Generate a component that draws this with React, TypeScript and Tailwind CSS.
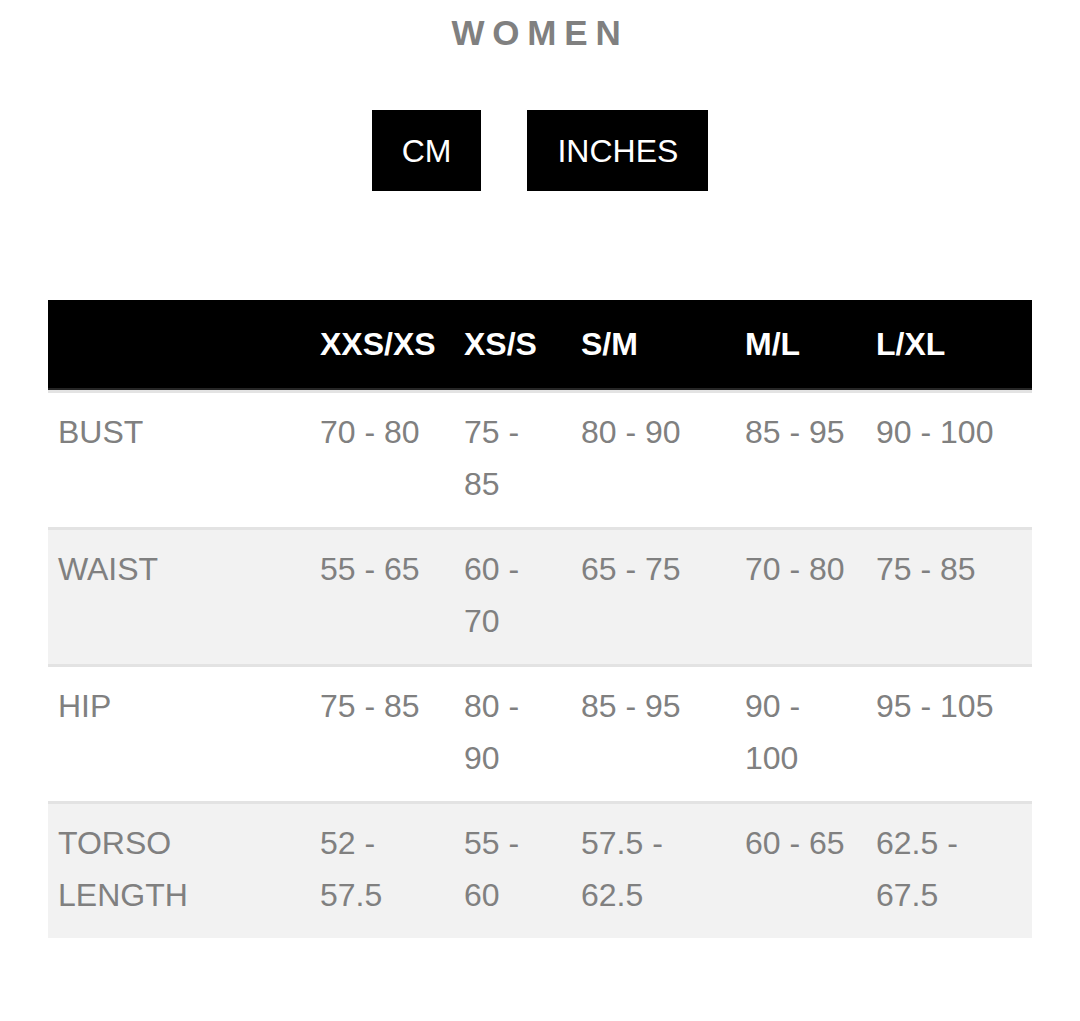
const sizes = ["XXS/XS", "XS/S", "S/M", "M/L", "L/XL"];

const rows: { label: string[]; cells: string[][] }[] = [
  {
    label: ["BUST"],
    cells: [["70 - 80"], ["75 -", "85"], ["80 - 90"], ["85 - 95"], ["90 - 100"]],
  },
  {
    label: ["WAIST"],
    cells: [["55 - 65"], ["60 -", "70"], ["65 - 75"], ["70 - 80"], ["75 - 85"]],
  },
  {
    label: ["HIP"],
    cells: [["75 - 85"], ["80 -", "90"], ["85 - 95"], ["90 -", "100"], ["95 - 105"]],
  },
  {
    label: ["TORSO", "LENGTH"],
    cells: [["52 -", "57.5"], ["55 -", "60"], ["57.5 -", "62.5"], ["60 - 65"], ["62.5 -", "67.5"]],
  },
];

const cols = "grid grid-cols-[262px_144px_117px_164px_131px_166px]";

function Lines({ lines }: { lines: string[] }) {
  return (
    <div className="pl-[10px] whitespace-nowrap">
      {lines.map((l, i) => (
        <div key={i}>{l}</div>
      ))}
    </div>
  );
}

export default function App() {
  return (
    <main
      className="min-h-[1021px] w-[1080px] bg-white"
      style={{ fontFamily: '"Liberation Sans", Arial, sans-serif' }}
    >
      {/* Title */}
      <h1 className="pt-[15px] text-center text-[35px] leading-[35px] font-bold tracking-[7.8px] text-[#808080]">
        WOMEN
      </h1>

      {/* Unit toggles */}
      <div className="mt-[60px] flex justify-center gap-[46px]">
        <button className="flex h-[81px] items-center bg-black px-[30px] text-[32px] text-white">
          CM
        </button>
        <button className="flex h-[81px] items-center bg-black px-[30px] text-[32px] text-white">
          INCHES
        </button>
      </div>

      {/* Size table */}
      <section className="mx-[48px] mt-[109px] w-[984px]">
        <div className={`${cols} h-[90px] items-center border-b-2 border-[#262626] bg-black text-[32px] font-bold text-white`}>
          <div />
          {sizes.map((s) => (
            <div key={s} className="pl-[10px] whitespace-nowrap">
              {s}
            </div>
          ))}
        </div>

        {rows.map((row, i) => (
          <div
            key={row.label.join(" ")}
            className={`${cols} h-[137px] border-t-[3px] border-[#e3e3e3] pt-[13px] text-[32px] leading-[52px] text-[#808080] ${
              i % 2 === 1 ? "bg-[#f2f2f2]" : "bg-white"
            }`}
          >
            <Lines lines={row.label} />
            {row.cells.map((c, j) => (
              <Lines key={j} lines={c} />
            ))}
          </div>
        ))}
      </section>
    </main>
  );
}
